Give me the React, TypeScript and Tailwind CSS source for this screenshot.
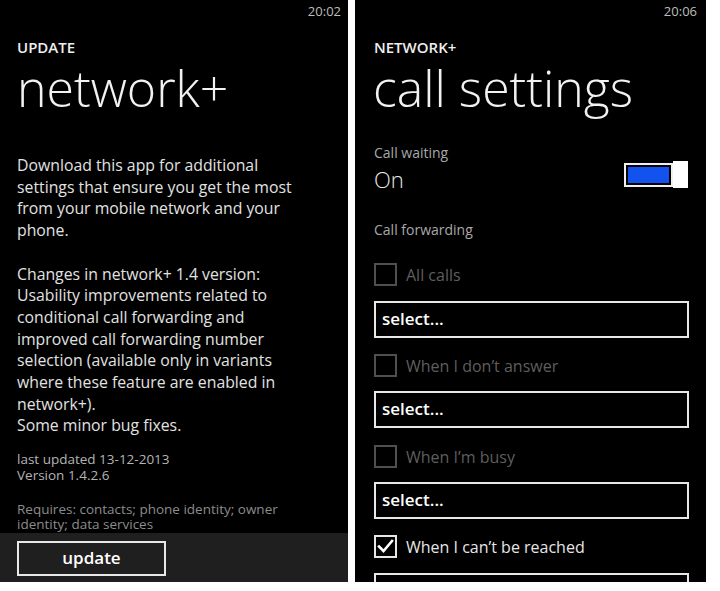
import React from "react";

const font = { fontFamily: '"Open Sans", "Noto Sans", "Liberation Sans", sans-serif' };

function CheckRow({ label, checked }: { label: string; checked?: boolean }) {
  return (
    <div className="flex h-[23px] items-center gap-[9px]">
      <div
        className={
          "flex h-[23px] w-[23px] items-center justify-center border-2 " +
          (checked ? "border-[#e6e6e6]" : "border-[#4f4f4f]")
        }
      >
        {checked && (
          <svg width="17" height="15" viewBox="0 0 17 15">
            <path d="M2 7.5 L6.5 12 L15 2" fill="none" stroke="#ffffff" strokeWidth="2.6" strokeLinecap="square" />
          </svg>
        )}
      </div>
      <span className={"text-[16px] leading-none " + (checked ? "text-[#e6e6e6]" : "text-[#5e5e5e]")}>{label}</span>
    </div>
  );
}

function SelectBox() {
  return (
    <div className="flex h-[37px] w-[315px] items-center border-2 border-[#e8e8e8] pl-[6px] pb-[2px] text-[17px] font-semibold leading-none text-white">
      select...
    </div>
  );
}

export default function App() {
  return (
    <div className="flex h-[591px] w-[720px] items-start bg-white" style={font}>
      {/* Left phone */}
      <div className="flex h-[582px] w-[348px] shrink-0 flex-col bg-black text-[#e8e8e8]">
        <div className="flex h-[22px] shrink-0 justify-end pr-[7px] pt-[4px] text-[13px] leading-[14px] text-[#bdbdbd]">20:02</div>
        <div className="shrink-0 px-[17px]">
          <div className="mt-[18px] text-[15px] font-semibold leading-[15px] text-[#eeeeee]">UPDATE</div>
          <div className="mt-[7px] text-[50px] font-light leading-[52px] text-[#f2f2f2]">network+</div>
          <div className="mt-[41px] whitespace-nowrap text-[15.8px] leading-[21.7px] text-[#e2e2e2]">
            Download this app for additional
            <br />
            settings that ensure you get the most
            <br />
            from your mobile network and your
            <br />
            phone.
            <br />
            <br />
            Changes in network+ 1.4 version:
            <br />
            Usability improvements related to
            <br />
            conditional call forwarding and
            <br />
            improved call forwarding number
            <br />
            selection (available only in variants
            <br />
            where these feature are enabled in
            <br />
            network+).
            <br />
            Some minor bug fixes.
          </div>
          <div className="mt-[15px] whitespace-nowrap text-[13.5px] leading-[15.5px] text-[#b4b4b4]">
            last updated 13-12-2013
            <br />
            Version 1.4.2.6
          </div>
          <div className="mt-[19px] whitespace-nowrap text-[13.5px] leading-[14.5px] text-[#8c8c8c]">
            Requires: contacts; phone identity; owner
            <br />
            identity; data services
          </div>
        </div>
        <div className="flex-1" />
        <div className="h-[49px] shrink-0 bg-[#1f1f1f] pl-[17px] pt-[8px]">
          <div className="flex h-[35px] w-[149px] items-center justify-center border-2 border-[#e8e8e8] pb-[2px] text-[17px] font-semibold leading-none text-white">
            update
          </div>
        </div>
      </div>

      <div className="w-[7px] shrink-0" />

      {/* Right phone */}
      <div className="h-[582px] w-[351px] shrink-0 overflow-hidden bg-black text-[#e8e8e8]">
        <div className="flex h-[22px] justify-end pr-[9px] pt-[4px] text-[13px] leading-[14px] text-[#bdbdbd]">20:06</div>
        <div className="pl-[19px] pr-[17px]">
          <div className="mt-[18px] text-[15px] font-semibold leading-[15px] text-[#eeeeee]">NETWORK+</div>
          <div className="-ml-[1px] mt-[7px] text-[50px] font-light leading-[52px] text-[#f2f2f2]">call settings</div>
          <div className="mt-[31px] text-[14px] leading-[16px] text-[#a8a8a8]">Call waiting</div>
          <div className="flex items-start justify-between">
            <div className="mt-[5px] text-[22px] font-light leading-[26px] text-[#e8e8e8]">On</div>
            <div className="mr-[1px] flex h-[27px] items-center">
              <div className="flex h-[24px] w-[49px] items-center border-2 border-[#f0f0f0] p-[2px]">
                <div className="h-full w-full bg-[#1252ee]" />
              </div>
              <div className="h-[27px] w-[15px] bg-white" />
            </div>
          </div>
          <div className="mt-[30px] text-[14px] leading-[16px] text-[#a8a8a8]">Call forwarding</div>
          <div className="mt-[25px]">
            <CheckRow label="All calls" />
          </div>
          <div className="mt-[15px]">
            <SelectBox />
          </div>
          <div className="mt-[16px]">
            <CheckRow label="When I don’t answer" />
          </div>
          <div className="mt-[14px]">
            <SelectBox />
          </div>
          <div className="mt-[17px]">
            <CheckRow label="When I’m busy" />
          </div>
          <div className="mt-[14px]">
            <SelectBox />
          </div>
          <div className="mt-[16px]">
            <CheckRow label="When I can’t be reached" checked />
          </div>
          <div className="mt-[15px]">
            <SelectBox />
          </div>
        </div>
      </div>
    </div>
  );
}
